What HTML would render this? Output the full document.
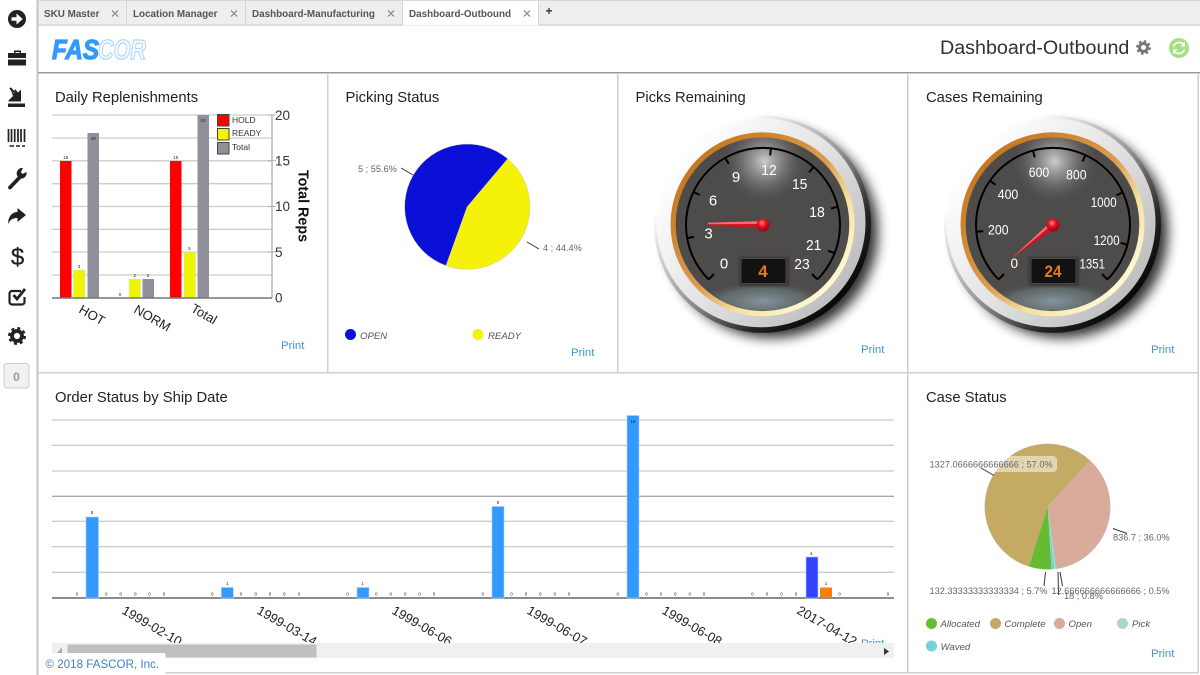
<!DOCTYPE html>
<html lang="en"><head><meta charset="utf-8"><title>Dashboard-Outbound</title>
<style>
html,body{margin:0;padding:0;background:#fff;width:1200px;height:675px;overflow:hidden}
svg{display:block;font-family:"Liberation Sans",Arial,sans-serif}
.t{font-size:14.8px;fill:#222}
.p{font-size:11.4px;fill:#3a96d8}
.tab{font-size:9.9px;font-weight:bold;fill:#555}
.x{stroke:#777;stroke-width:1;fill:none}
.v{font-size:4.5px;fill:#222;text-anchor:middle}
.g{stroke:#ccc;stroke-width:1.3}
.pl{font-size:9.2px;fill:#666}
.lg{font-size:9.6px;font-style:italic;fill:#555}
.gn{font-size:15px;fill:#fff;text-anchor:middle}
.gm{font-size:13.6px;fill:#fff;text-anchor:middle}
.xl{font-size:13px;fill:#222}
.yl{font-size:13.5px;fill:#333}
.ld{stroke:#333;stroke-width:1;fill:none}
</style></head><body>
<svg width="1200" height="675" viewBox="0 0 1200 675" xmlns="http://www.w3.org/2000/svg">
<defs>
<linearGradient id="ring" x1="0.1" y1="0.2" x2="0.9" y2="0.85"><stop offset="0" stop-color="#fff"/><stop offset=".45" stop-color="#e6e6e6"/><stop offset="1" stop-color="#bcbcbc"/></linearGradient>
<linearGradient id="edge" x1="0.1" y1="0.1" x2="0.9" y2="0.9"><stop offset="0.15" stop-color="#fff"/><stop offset=".5" stop-color="#999"/><stop offset=".78" stop-color="#222"/><stop offset="1" stop-color="#000"/></linearGradient>
<linearGradient id="org" x1="0.1" y1="0.15" x2="0.85" y2="0.9"><stop offset="0" stop-color="#c4761c"/><stop offset=".5" stop-color="#dc9c50"/><stop offset=".72" stop-color="#f6e0a0"/><stop offset="1" stop-color="#fffbd8"/></linearGradient>
<radialGradient id="top" gradientUnits="userSpaceOnUse" cx="2" cy="-63" r="44"><stop offset="0" stop-color="#cccccc"/><stop offset=".45" stop-color="#858483" stop-opacity=".8"/><stop offset="1" stop-color="#4e4c4b" stop-opacity="0"/></radialGradient>
<radialGradient id="bot"><stop offset="0" stop-color="#84959a"/><stop offset=".65" stop-color="#687477" stop-opacity=".7"/><stop offset="1" stop-color="#4e4c4b" stop-opacity="0"/></radialGradient>
<radialGradient id="knob" cx=".42" cy=".35" r=".7"><stop offset="0" stop-color="#ff8888"/><stop offset=".4" stop-color="#e81020"/><stop offset="1" stop-color="#900010"/></radialGradient>
<filter id="bl" x="-25%" y="-25%" width="150%" height="150%"><feGaussianBlur stdDeviation="6"/></filter>
<filter id="bs" x="-20%" y="-20%" width="140%" height="140%"><feGaussianBlur stdDeviation="1"/></filter>
<clipPath id="xc"><rect x="52" y="600" width="842" height="43"/></clipPath>
<clipPath id="pc"><rect x="840" y="630" width="60" height="13"/></clipPath>
<clipPath id="fc"><circle r="86.500"/></clipPath>
<g id="gb">
<circle cx="9" cy="7" r="106" fill="#000" opacity=".8" filter="url(#bl)"/>
<g transform="translate(-.5,-.7)">
<circle r="108.500" fill="url(#edge)"/>
<circle cx="-1.500" cy="-1.500" r="104.500" fill="url(#ring)"/>
<circle r="92" fill="url(#org)"/>
<circle r="86.800" fill="#4e4c4b"/>
<circle r="86.800" fill="url(#top)"/>
<ellipse cx="0" cy="77" rx="66" ry="20" fill="url(#bot)" clip-path="url(#fc)"/>
</g>
<path d="M-54.400 54.400A77 77 0 1 1 54.400 54.400" fill="none" stroke="#000" stroke-width="2"/>
<path d="M-54.400 54.400L-49 49M54.400 54.400L49 49" stroke="#000" stroke-width="2"/>
<rect x="-24" y="32" width="50" height="29" fill="#3a3533" filter="url(#bs)"/>
<rect x="-22" y="33.500" width="45" height="25" fill="#111214" stroke="#4a4644" stroke-width="1"/>
</g>
<path id="tk" d="M0 -77V-70" stroke="#000" stroke-width="2"/>
</defs>

<rect width="1200" height="675" fill="#fff"/>
<!-- tab bar -->
<rect x="38" y="0" width="1162" height="25" fill="#eeeeee"/>
<rect x="38" y="0" width="1162" height="1" fill="#d8d8d8"/>
<rect x="38" y="24" width="1162" height="2" fill="#dddddd"/>
<rect x="403" y="1" width="135" height="24.500" fill="#fff"/>
<rect x="126" y="1" width="1" height="23" fill="#d5d5d5"/>
<rect x="245" y="1" width="1" height="23" fill="#d5d5d5"/>
<rect x="402" y="1" width="1" height="24" fill="#d5d5d5"/>
<rect x="538" y="1" width="1" height="24" fill="#d5d5d5"/>
<text x="44" y="17" class="tab">SKU Master</text>
<text x="133" y="17" class="tab">Location Manager</text>
<text x="252" y="17" class="tab">Dashboard-Manufacturing</text>
<text x="409" y="17" class="tab">Dashboard-Outbound</text>
<path class="x" d="M112 10.500l6 6m0-6l-6 6M231 10.500l6 6m0-6l-6 6M388 10.500l6 6m0-6l-6 6M524 10.500l6 6m0-6l-6 6"/>
<text x="549" y="15" font-size="12" font-weight="bold" fill="#333" text-anchor="middle">+</text>

<!-- header -->
<rect x="38" y="72" width="1162" height="1.500" fill="#999"/>
<text x="52" y="59" font-size="28" font-weight="bold" font-style="italic" fill="#3399ff" stroke="#3399ff" stroke-width="1.200" textLength="47" lengthAdjust="spacingAndGlyphs">FAS</text>
<text x="98" y="59" font-size="28" font-weight="bold" font-style="italic" fill="#fff" stroke="#a9d6ff" stroke-width="1.300" textLength="48" lengthAdjust="spacingAndGlyphs">COR</text>
<text x="940" y="54" font-size="19.700" fill="#333">Dashboard-Outbound</text>
<g transform="translate(1143.500,47.500)" fill="none" stroke="#777"><circle r="4" stroke-width="3"/><circle r="6.300" stroke-width="2.200" stroke-dasharray="2.480 2.470"/></g>
<circle cx="1179" cy="48" r="10" fill="#a4e085"/>
<g fill="none" stroke="#fff" stroke-width="1.700"><path d="M1173.500 46.500A6 6 0 0 1 1184 45"/><path d="M1184.500 49.500A6 6 0 0 1 1174 51"/></g>
<path d="M1185 41.500V46.500H1180.500ZM1173 54.500V49.500H1177.500Z" fill="#fff"/>

<!-- sidebar -->
<rect x="36.500" y="0" width="2" height="675" fill="#c4c4c4"/>
<circle cx="17" cy="19" r="9" fill="#222"/>
<path d="M11.500 17.200H16.500V13.500L22.800 19L16.500 24.500V20.800H11.500Z" fill="#fff"/>
<path d="M14 53V50.500H21V53H26V58H8V53ZM15.500 53H19.500V52H15.500ZM8 59.500H26V65.500H8Z" fill="#222" fill-rule="evenodd"/>
<path d="M8 103.500H25V107H8ZM8.500 100.500L13 96L11 90.500L14 93.500L15 89L18 92.500L21 89.500V101.500H8.500Z" fill="#222"/>
<path d="M10 88L14 92" stroke="#222" stroke-width="2"/>
<path d="M8.500 129V142M11.500 129V142M14.700 129V142M18 129V142M21 129V142M24.500 129V142" stroke="#222" stroke-width="1.700" fill="none"/>
<path d="M9.500 146H14M16 146H20M22 146H25" stroke="#222" stroke-width="1.500"/>
<path d="M10 187.500L20.500 176.500" stroke="#222" stroke-width="3.800" stroke-linecap="round"/>
<path d="M20 178.500A5.500 5.500 0 0 1 23 168L20.800 172L22.500 174L26.500 172A5.500 5.500 0 0 1 20 178.500Z" fill="#222"/>
<path d="M17.500 208L26 215L17.500 222V218C13.500 218 10.500 219 8 224C8.300 217 11.500 212 17.500 212Z" fill="#222"/>
<text x="17.500" y="265" font-size="24" fill="#222" text-anchor="middle" stroke="#222" stroke-width=".3">$</text>
<path d="M21 291H12A2.500 2.500 0 0 0 9.500 293.500V302A2.500 2.500 0 0 0 12 304.500H22A2.500 2.500 0 0 0 24.500 302V297" fill="none" stroke="#222" stroke-width="2.200"/>
<path d="M13.500 295L17 299L25 289" fill="none" stroke="#222" stroke-width="2.800"/>
<g transform="translate(17,336)" fill="none" stroke="#222"><circle r="5" stroke-width="3.800"/><circle r="7.500" stroke-width="3" stroke-dasharray="2.950 2.940"/></g>
<rect x="4" y="363.500" width="25" height="24.500" rx="3" fill="#f1f1f1" stroke="#ccc"/>
<text x="16.500" y="381" font-size="12" font-weight="bold" fill="#999" text-anchor="middle">0</text>

<!-- panel borders -->
<g fill="#cfcfcf">
<rect x="327" y="73" width="1.500" height="300"/>
<rect x="617" y="73" width="1.500" height="300"/>
<rect x="907" y="73" width="1.500" height="600"/>
<rect x="38" y="372" width="1160" height="1.500"/>
<rect x="1197.500" y="73" width="1.500" height="600"/>
<rect x="38" y="672" width="1161" height="1.500"/>
</g>

<!-- titles -->
<text x="55" y="102" class="t">Daily Replenishments</text>
<text x="345.500" y="102" class="t">Picking Status</text>
<text x="635.500" y="102" class="t">Picks Remaining</text>
<text x="926" y="102" class="t">Cases Remaining</text>
<text x="55" y="402" class="t">Order Status by Ship Date</text>
<text x="926" y="402" class="t">Case Status</text>

<!-- Daily replenishments -->
<g class="g"><path d="M52 115H272M52 138H272M52 160.800H272M52 183.700H272M52 206.500H272M52 229.300H272M52 252H272M52 275H272"/></g>
<path d="M272 115V298" stroke="#aaa" stroke-width="1.200"/>
<path d="M268 115H276M268 160.800H276M268 206.500H276M268 252H276" stroke="#aaa"/>
<rect x="60" y="161" width="11.500" height="137" fill="#ff0000"/>
<rect x="73.500" y="270" width="11.500" height="28" fill="#eef500" stroke="#ddd" stroke-width=".6"/>
<rect x="87.500" y="133" width="11.500" height="165" fill="#90909a"/>
<rect x="129" y="279" width="11.500" height="19" fill="#eef500" stroke="#ddd" stroke-width=".6"/>
<rect x="142.500" y="279" width="11.500" height="19" fill="#90909a"/>
<rect x="170" y="161" width="11.500" height="137" fill="#ff0000"/>
<rect x="184" y="252" width="11.500" height="46" fill="#eef500" stroke="#ddd" stroke-width=".6"/>
<rect x="197.500" y="115" width="11.500" height="183" fill="#90909a"/>
<path d="M52 298H272" stroke="#777" stroke-width="1.500"/>
<text x="65.700" y="159" class="v">15</text><text x="79" y="268" class="v">3</text><text x="93.200" y="140" class="v">18</text><text x="120" y="296" class="v">0</text><text x="134.700" y="277" class="v">2</text><text x="148" y="277" class="v">2</text><text x="175.700" y="159" class="v">15</text><text x="189.500" y="250" class="v">5</text><text x="203" y="122" class="v">20</text>
<rect x="217.500" y="114.500" width="11.500" height="11.500" fill="#ff0000" stroke="#444"/>
<rect x="217.500" y="128.500" width="11.500" height="11.500" fill="#eef500" stroke="#444"/>
<rect x="217.500" y="142.500" width="11.500" height="11.500" fill="#90909a" stroke="#444"/>
<text x="232" y="123" font-size="8.500" fill="#333">HOLD</text>
<text x="232" y="136" font-size="8.500" fill="#333">READY</text>
<text x="232" y="150" font-size="8.500" fill="#333">Total</text>
<text x="275" y="120" class="yl">20</text><text x="275" y="165.500" class="yl">15</text><text x="275" y="211" class="yl">10</text><text x="275" y="257" class="yl">5</text><text x="275" y="302.500" class="yl">0</text>
<text transform="translate(298.500,170) rotate(90)" font-size="14.300" font-weight="bold" fill="#111">Total Reps</text>
<text transform="translate(78,312) rotate(30)" class="xl">HOT</text>
<text transform="translate(133,312) rotate(30)" class="xl">NORM</text>
<text transform="translate(190,311) rotate(30)" class="xl">Total</text>
<text x="281" y="349" class="p">Print</text>

<!-- Picking pie -->
<path d="M467.300 206.700L446 265.700A62.700 62.700 0 1 1 507.750 158.800Z" fill="#0a10d8" stroke="#ccc" stroke-width=".5"/>
<path d="M467.300 206.700L507.750 158.800A62.700 62.700 0 0 1 446 265.700Z" fill="#f5f108" stroke="#ccc" stroke-width=".5"/>
<path class="ld" d="M401 168L413 175M527 242L539 249"/>
<text x="358" y="172" class="pl">5 ; 55.6%</text>
<text x="543" y="251" class="pl">4 ; 44.4%</text>
<circle cx="350.500" cy="334.500" r="5.500" fill="#0a10d8"/><circle cx="478" cy="334.500" r="5.500" fill="#f5f108"/>
<text x="360" y="339" class="lg">OPEN</text><text x="488" y="339" class="lg">READY</text>
<text x="571" y="356" class="p">Print</text>

<!-- Gauges -->
<g transform="translate(763,225)">
<use href="#gb"/>
<use href="#tk" transform="rotate(-99.800)"/><use href="#tk" transform="rotate(-64.600)"/><use href="#tk" transform="rotate(-29.300)"/><use href="#tk" transform="rotate(5.900)"/><use href="#tk" transform="rotate(41.100)"/><use href="#tk" transform="rotate(76.300)"/><use href="#tk" transform="rotate(111.500)"/>
<polygon points="-55,-2.200 0,-4 0,3 -55,0.800" fill="#c81622"/>
<path d="M-55 -2.200L0 -4V-1L-55 -.7Z" fill="#ff6a70"/>
<circle r="6.500" fill="url(#knob)"/>
</g>
<g class="gn"><text x="724" y="268.500">0</text><text x="708.500" y="238.500">3</text><text x="713" y="205.500">6</text><text x="736" y="182">9</text><text x="769" y="175" textLength="15.500" lengthAdjust="spacingAndGlyphs">12</text><text x="799.700" y="189" textLength="15.500" lengthAdjust="spacingAndGlyphs">15</text><text x="817" y="217" textLength="15.500" lengthAdjust="spacingAndGlyphs">18</text><text x="813.700" y="250" textLength="15.500" lengthAdjust="spacingAndGlyphs">21</text><text x="802" y="269" textLength="15.500" lengthAdjust="spacingAndGlyphs">23</text></g>
<text x="763" y="277" font-size="17" font-weight="bold" fill="#f07810" text-anchor="middle">4</text>
<text x="861" y="353" class="p">Print</text>

<g transform="translate(1053,225)">
<use href="#gb"/>
<use href="#tk" transform="rotate(-95)"/><use href="#tk" transform="rotate(-55)"/><use href="#tk" transform="rotate(-15.100)"/><use href="#tk" transform="rotate(24.900)"/><use href="#tk" transform="rotate(64.900)"/><use href="#tk" transform="rotate(104.800)"/>
<polygon points="-41.500,33.500 2.500,3 -2.500,-3" fill="#c81622"/>
<path d="M-41.500 33.500L-2.500 -3L-0.500 -.6Z" fill="#ff6a70"/>
<circle r="6.500" fill="url(#knob)"/>
</g>
<g class="gm"><text x="1014.300" y="268">0</text><text x="998.300" y="234.500" textLength="20.500" lengthAdjust="spacingAndGlyphs">200</text><text x="1008" y="199" textLength="20.500" lengthAdjust="spacingAndGlyphs">400</text><text x="1039" y="177" textLength="20.500" lengthAdjust="spacingAndGlyphs">600</text><text x="1076.300" y="179.500" textLength="20.500" lengthAdjust="spacingAndGlyphs">800</text><text x="1103.700" y="207" textLength="26" lengthAdjust="spacingAndGlyphs">1000</text><text x="1106.700" y="245" textLength="26" lengthAdjust="spacingAndGlyphs">1200</text><text x="1092.300" y="268.500" textLength="25.500" lengthAdjust="spacingAndGlyphs">1351</text></g>
<text x="1053" y="277" font-size="17" font-weight="bold" fill="#f07810" text-anchor="middle" textLength="17" lengthAdjust="spacingAndGlyphs">24</text>
<text x="1151" y="353" class="p">Print</text>

<!-- Order status chart -->
<g class="g"><path d="M52 420H894M52 445.300H894M52 471H894M52 521.300H894M52 546.700H894M52 572.300H894"/><path d="M52 496.300H894" stroke="#aaa"/></g>
<path d="M52 598H894" stroke="#666" stroke-width="1.500"/>
<g fill="#3399ff" stroke="#a8d0f5" stroke-width=".6">
<rect x="86" y="517" width="12.500" height="81"/>
<rect x="221.300" y="587.500" width="12" height="10.500"/>
<rect x="357" y="587.500" width="12" height="10.500"/>
<rect x="492" y="506.500" width="12" height="91.500"/>
<rect x="627" y="415.500" width="12" height="182.500"/>
</g>
<rect x="806" y="557" width="12" height="41" fill="#3344ff" stroke="#c0c8ff" stroke-width=".6"/>
<rect x="820" y="587.500" width="12" height="10.500" fill="#fb7d0a"/>
<g class="v">
<text x="77" y="595.500">0</text><text x="92" y="514">8</text><text x="106.300" y="595.500">0</text><text x="120.700" y="595.500">0</text><text x="135.300" y="595.500">0</text><text x="149.500" y="595.500">0</text><text x="164" y="595.500">0</text>
<text x="212.300" y="595.500">0</text><text x="227.300" y="585">1</text><text x="241" y="595.500">0</text><text x="255.700" y="595.500">0</text><text x="270" y="595.500">0</text><text x="284.300" y="595.500">0</text><text x="299" y="595.500">0</text>
<text x="347.500" y="595.500">0</text><text x="362.500" y="585">1</text><text x="376.300" y="595.500">0</text><text x="390.800" y="595.500">0</text><text x="405.200" y="595.500">0</text><text x="419.500" y="595.500">0</text><text x="434" y="595.500">0</text>
<text x="482.700" y="595.500">0</text><text x="498" y="504">9</text><text x="511.500" y="595.500">0</text><text x="526" y="595.500">0</text><text x="540.300" y="595.500">0</text><text x="554.700" y="595.500">0</text><text x="569" y="595.500">0</text>
<text x="617.700" y="595.500">0</text><text x="633" y="423">18</text><text x="646.500" y="595.500">0</text><text x="661" y="595.500">0</text><text x="675.300" y="595.500">0</text><text x="689.700" y="595.500">0</text><text x="704" y="595.500">0</text>
<text x="752.500" y="595.500">0</text><text x="767" y="595.500">0</text><text x="781.500" y="595.500">0</text><text x="796" y="595.500">0</text><text x="811" y="555">4</text><text x="826" y="585">1</text><text x="839.500" y="595.500">0</text><text x="888" y="595.500">0</text>
</g>
<g clip-path="url(#xc)">
<text transform="translate(121,613) rotate(30)" class="xl">1999-02-10</text>
<text transform="translate(256,613) rotate(30)" class="xl">1999-03-14</text>
<text transform="translate(391,613) rotate(30)" class="xl">1999-06-06</text>
<text transform="translate(526,613) rotate(30)" class="xl">1999-06-07</text>
<text transform="translate(661,613) rotate(30)" class="xl">1999-06-08</text>
<text transform="translate(796,613) rotate(30)" class="xl">2017-04-12</text>
</g>
<text x="861" y="647" class="p" clip-path="url(#pc)">Print</text>
<rect x="52" y="643" width="842" height="15" fill="#f0f0f0"/>
<rect x="67.500" y="644.500" width="249" height="13" fill="#bfbfbf"/>
<path d="M62 647V653H57Z" fill="#aaa"/>
<path d="M884 648V655L889 651.500Z" fill="#333"/>

<!-- Case pie -->
<path d="M1047.700 506.700L1029 566.500A62.700 62.700 0 1 1 1090 460.500Z" fill="#c4aa62" stroke="#bbb" stroke-width=".5"/>
<path d="M1047.700 506.700L1090 460.500A62.700 62.700 0 0 1 1056 568.800Z" fill="#d8ab9a" stroke="#bbb" stroke-width=".5"/>
<path d="M1047.700 506.700L1029 566.500A62.700 62.700 0 0 0 1051.500 569.300Z" fill="#66bb33"/>
<path d="M1047.700 506.700L1051.500 569.300L1054.500 569Z" fill="#74d0dc"/>
<path d="M1047.700 506.700L1054.500 569L1056 568.800Z" fill="#aad9c4"/>
<rect x="930" y="456" width="127" height="16" rx="4" fill="#fff" opacity=".5"/>
<path class="ld" d="M981 468L994 475.500M1113 528.500L1127 533.500M1045.500 572L1044 586M1058 572L1058.500 595M1060 572L1062.500 586"/>
<g class="pl">
<text x="929.500" y="467.500">1327.0666666666666 ; 57.0%</text>
<text x="1113" y="540.500">836.7 ; 36.0%</text>
<text x="929.500" y="594">132.33333333333334 ; 5.7%</text>
<text x="1051.500" y="594">12.666666666666666 ; 0.5%</text>
<text x="1064" y="599">18 ; 0.8%</text>
</g>
<circle cx="931.500" cy="623.500" r="5.500" fill="#66bb33"/><circle cx="995.500" cy="623.500" r="5.500" fill="#c4aa62"/><circle cx="1059.500" cy="623.500" r="5.500" fill="#d8ab9a"/><circle cx="1122.500" cy="623.500" r="5.500" fill="#aad9c4"/><circle cx="931.500" cy="646" r="5.500" fill="#74d0dc"/>
<text x="940.500" y="627" class="lg">Allocated</text><text x="1004.500" y="627" class="lg">Complete</text><text x="1068.500" y="627" class="lg">Open</text><text x="1132" y="627" class="lg">Pick</text><text x="940.500" y="650" class="lg">Waved</text>
<text x="1151" y="657" class="p">Print</text>

<!-- footer -->
<path d="M38.500 675V653H163.500Q165.500 653 165.500 655V675Z" fill="#fff"/>
<text x="45.500" y="668" font-size="11.600" fill="#3f82c4">© 2018 FASCOR, Inc.</text>
</svg>
</body></html>
